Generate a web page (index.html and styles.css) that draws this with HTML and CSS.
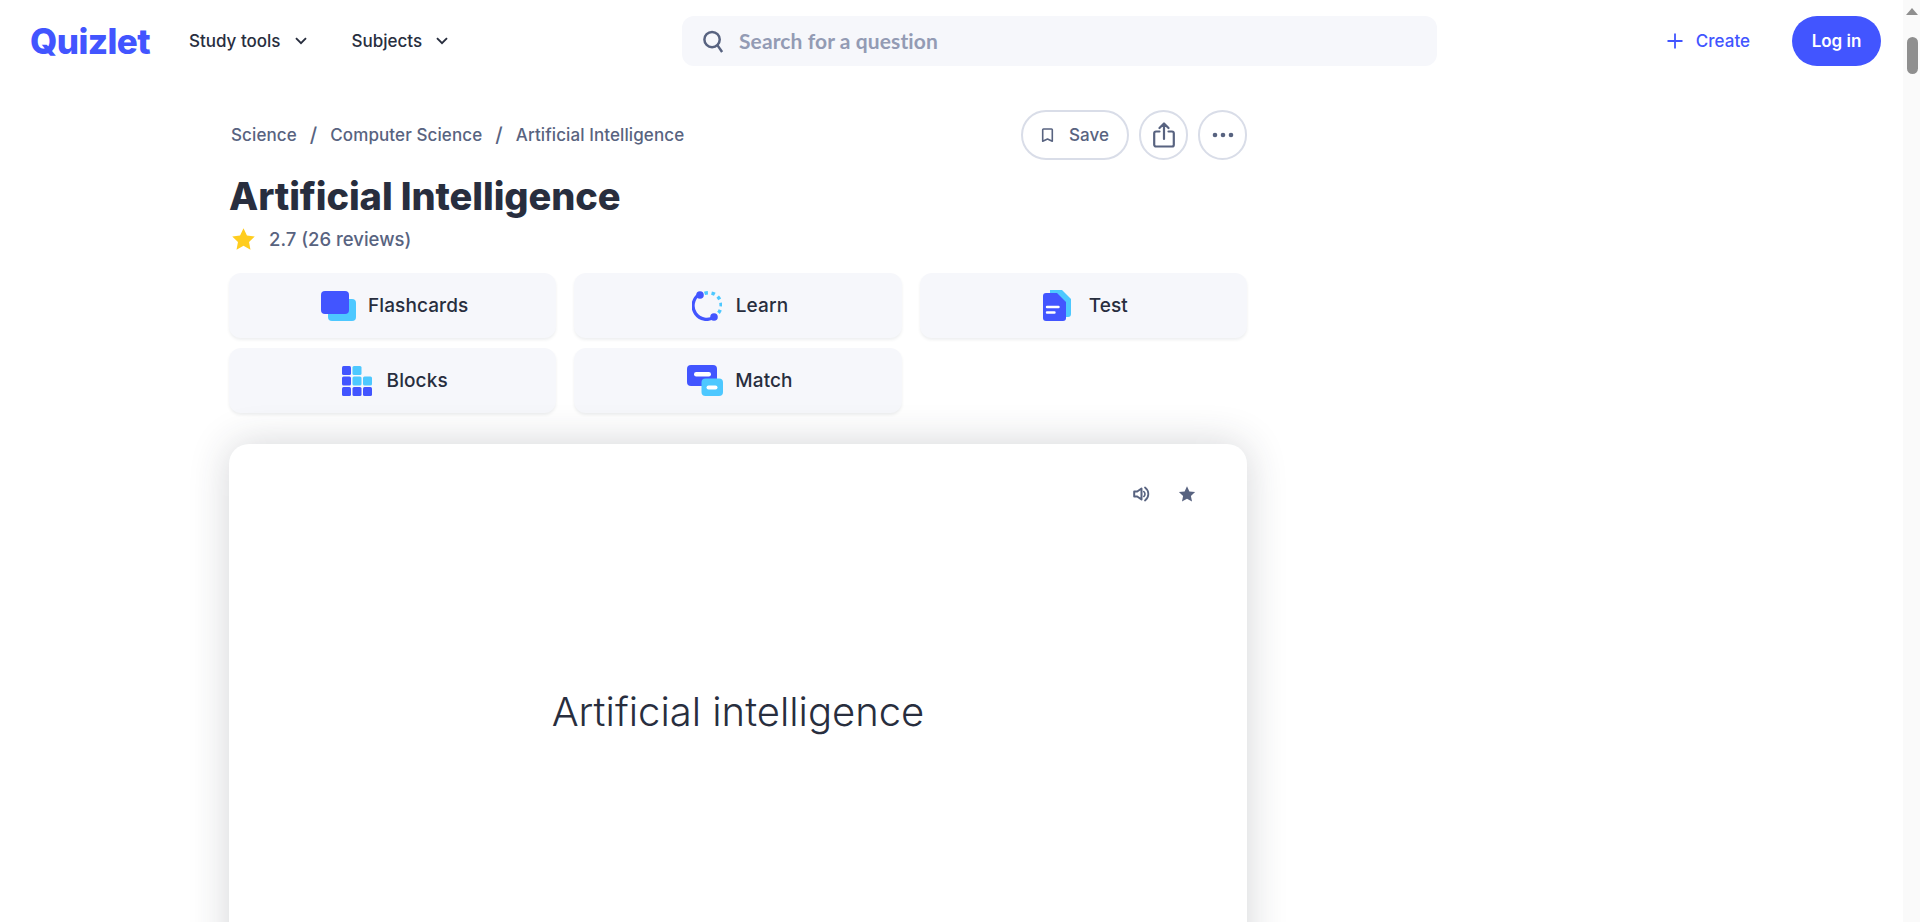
FILE: index.html
```html
<!DOCTYPE html>
<html lang="en">
<head>
<meta charset="utf-8">
<title>Artificial Intelligence | Quizlet</title>
<link rel="stylesheet" href="styles.css">
</head>
<body>
<header class="topbar">
  <div class="nav-left">
    <a class="logo">Quizlet</a>
    <a class="nav-item">Study tools
      <svg class="chev" viewBox="0 0 12 8"><path d="M1 1.2l5 5 5-5"/></svg></a>
    <a class="nav-item">Subjects
      <svg class="chev" viewBox="0 0 12 8"><path d="M1 1.2l5 5 5-5"/></svg></a>
  </div>
  <div class="search">
    <svg class="search-icon" viewBox="0 0 24 24"><circle cx="10.5" cy="10.500" r="8"/><path d="M16.200 16.600L21 23.500"/></svg>
    <span class="search-text">Search for a question</span>
  </div>
  <div class="nav-right">
    <a class="create">
      <svg class="plus" viewBox="0 0 16 16"><path d="M8 .5v15M.5 8h15"/></svg>
      Create</a>
    <a class="login">Log in</a>
  </div>
</header>

<main class="content">
  <div class="crumb-row">
    <nav class="crumbs">
      <a>Science</a><span class="sep">/</span><a>Computer Science</a><span class="sep">/</span><a>Artificial Intelligence</a>
    </nav>
    <div class="actions">
      <button class="pill">
        <svg class="bookmark" viewBox="0 0 12 15"><path d="M1.200 1.800a.8.8 0 0 1 .8-.8h8a.8.8 0 0 1 .8.8v11.400L6 11l-4.800 2.200z"/></svg>
        Save</button>
      <button class="round">
        <svg class="share" viewBox="0 0 22 26"><path d="M6.500 9.500H3a1.800 1.800 0 0 0-1.800 1.800v11.400A1.800 1.800 0 0 0 3 24.500h16a1.800 1.800 0 0 0 1.800-1.800V11.300a1.800 1.800 0 0 0-1.800-1.800h-3.500M11 17V2M6.500 6L11 1.500 15.500 6"/></svg>
      </button>
      <button class="round">
        <svg class="dots" viewBox="0 0 22 6"><circle cx="3" cy="3" r="2.300"/><circle cx="11" cy="3" r="2.300"/><circle cx="19" cy="3" r="2.300"/></svg>
      </button>
    </div>
  </div>

  <h1 class="title">Artificial Intelligence</h1>
  <div class="rating">
    <svg class="rating-star" viewBox="0 0 24 24"><path d="M12 1.200l3.300 6.900 7.500 1-5.500 5.200 1.400 7.500-6.700-3.700-6.700 3.700 1.400-7.500L1.200 9.100l7.500-1z"/></svg>
    <span>2.7 (26 reviews)</span>
  </div>

  <div class="modes">
    <a class="mode">
      <svg class="mi mi-flash" viewBox="0 0 35 30"><rect x="7" y="8" width="28" height="22" rx="4" fill="#4dc8ff"/><rect x="0" y="0" width="28" height="23" rx="4" fill="#4255ff"/></svg>
      Flashcards</a>
    <a class="mode">
      <svg class="mi mi-learn" viewBox="0 0 30 30"><path d="M7 3.500a12 12 0 0 0 15.500 22.500" fill="none" stroke="#4255ff" stroke-width="3.200"/><path d="M12.500 2.400a12.500 12.500 0 0 1 12 21.500" fill="none" stroke="#4dc8ff" stroke-width="3.400" stroke-dasharray="3.500 3.600"/><circle cx="8" cy="4" r="3.800" fill="#4255ff"/><circle cx="22" cy="26" r="3.800" fill="#4255ff"/></svg>
      Learn</a>
    <a class="mode">
      <svg class="mi mi-test" viewBox="0 0 28 31"><path d="M7 0h12l9 9v15a3 3 0 0 1-3 3H7z" fill="#4dc8ff"/><path d="M3 3h11l9 9v16a3 3 0 0 1-3 3H3a3 3 0 0 1-3-3V6a3 3 0 0 1 3-3z" fill="#4255ff"/><path d="M4 17h11.500M4 22.500h7.500" stroke="#fff" stroke-width="2.400" stroke-linecap="round" fill="none"/></svg>
      Test</a>
    <a class="mode">
      <svg class="mi mi-blocks" viewBox="0 0 30 30"><g fill="#4255ff"><rect width="9" height="9" rx="1.500"/><rect y="10.500" width="9" height="9" rx="1.500"/><rect y="21" width="9" height="9" rx="1.500"/><rect x="10.500" y="21" width="9" height="9" rx="1.500"/><rect x="21" y="21" width="9" height="9" rx="1.500"/></g><g fill="#4dc8ff"><rect x="10.500" width="9" height="9" rx="1.500"/><rect x="10.500" y="10.500" width="9" height="9" rx="1.500"/><rect x="21" y="10.500" width="9" height="9" rx="1.500"/></g></svg>
      Blocks</a>
    <a class="mode">
      <svg class="mi mi-match" viewBox="0 0 36 31"><rect width="30" height="21" rx="4" fill="#4255ff"/><rect x="7" y="7" width="17" height="4.500" rx="2.200" fill="#fff"/><rect x="14.500" y="13.500" width="21.500" height="17.500" rx="4" fill="#4dc8ff"/><rect x="19.500" y="20.500" width="11" height="4" rx="2" fill="#fff"/></svg>
      Match</a>
  </div>

  <section class="card">
    <div class="card-tools">
      <svg class="tool-sound" viewBox="0 0 18 16"><path d="M1.200 5.500h3L8.500 2.500v11l-4.300-3h-3z" fill="none" stroke="#586380" stroke-width="2" stroke-linejoin="round"/><path d="M12 1.500a8 8 0 0 1 0 13" fill="none" stroke="#586380" stroke-width="1.800" stroke-linecap="round"/><path d="M10.800 5.500a3.200 3.200 0 0 1 0 5" fill="none" stroke="#586380" stroke-width="1.600" stroke-linecap="round"/></svg>
      <svg class="tool-star" viewBox="0 0 24 24"><path d="M12 1.500l3.200 7 7.600.9-5.600 5.200 1.500 7.500-6.700-3.800-6.700 3.800 1.500-7.500-5.600-5.200 7.600-.9z"/></svg>
    </div>
    <p class="term">Artificial intelligence</p>
  </section>
</main>

<div class="scrollbar" aria-hidden="true">
  <span class="arrow"></span>
  <span class="thumb"></span>
</div>
</body>
</html>
```
FILE: styles.css
```css
* { box-sizing: border-box; }
html, body { margin: 0; height: 922px; overflow: hidden; background: #fff; }
body { font-family: Inter, "Open Sans", sans-serif; color: #282e3e; }
a { color: inherit; text-decoration: none; }

.topbar {
  display: flex;
  align-items: center;
  height: 82px;
  padding: 0 39px 0 30px;
}
.nav-left { display: flex; align-items: center; width: 652px; }
.logo {
  font-weight: 800;
  font-size: 35px;
  letter-spacing: -.6px;
  color: #4255ff;
  width: 159px;
}
.nav-item {
  display: flex;
  align-items: center;
  font-size: 17px;
  font-weight: 500;
  gap: 14px;
  margin-right: 45px;
  white-space: nowrap;
}
.chev { width: 12px; height: 8px; fill: none; stroke: #282e3e; stroke-width: 1.900; }

.search {
  display: flex;
  align-items: center;
  width: 755px;
  height: 50px;
  padding-left: 20px;
  background: #f6f7fb;
  border-radius: 12px;
}
.search-icon { width: 23px; height: 24px; fill: none; stroke: #586380; stroke-width: 2.600; margin-right: 14px; }
.search-text { font-family: Lato, sans-serif; font-size: 21px; font-weight: 700; letter-spacing: .1px; color: #939bb4; margin-bottom: 2px; }

.nav-right { display: flex; align-items: center; margin-left: auto; }
.create {
  display: flex;
  align-items: center;
  gap: 13px;
  font-size: 17px;
  font-weight: 500;
  color: #4255ff;
  margin-right: 42px;
}
.plus { width: 16px; height: 16px; fill: none; stroke: #4255ff; stroke-width: 1.800; }
.login {
  display: flex;
  align-items: center;
  justify-content: center;
  width: 89px;
  height: 50px;
  border-radius: 25px;
  background: #4255ff;
  color: #fff;
  font-size: 17px;
  font-weight: 600;
}

.content { width: 1018px; margin-left: 229px; }
.crumb-row { display: flex; justify-content: space-between; align-items: center; height: 50px; margin-top: 28px; }
.crumbs { display: flex; align-items: center; padding-left: 2px; font-size: 17px; font-weight: 500; letter-spacing: .1px; color: #586380; }
.sep { margin: 0 13px; font-size: 20px; }
.actions { display: flex; gap: 10px; }
.pill, .round {
  display: flex;
  align-items: center;
  justify-content: center;
  height: 50px;
  background: #fff;
  border: 2px solid #d9dde8;
  border-radius: 25px;
  font-family: inherit;
  color: #586380;
  padding: 0;
}
.pill { width: 108px; gap: 15px; font-size: 17px; font-weight: 500; }
.round { width: 49px; }
.bookmark { width: 13px; height: 15px; fill: none; stroke: #586380; stroke-width: 1.600; stroke-linejoin: round; }
.share { width: 22px; height: 26px; fill: none; stroke: #586380; stroke-width: 2.200; stroke-linecap: round; stroke-linejoin: round; }
.dots { width: 22px; height: 6px; fill: #586380; }

.title { margin: 14px 0 0; font-size: 38px; line-height: 44px; font-weight: 800; letter-spacing: -.1px; color: #282e3e; }
.rating { display: flex; align-items: center; height: 28px; margin-top: 7px; padding-left: 2px; font-size: 18.500px; font-weight: 500; color: #586380; gap: 13px; }
.rating-star { width: 25px; height: 25px; fill: #ffcd1f; }

.modes { display: grid; grid-template-columns: repeat(3, 1fr); gap: 10px 18px; margin-top: 20px; }
.mode {
  display: flex;
  align-items: center;
  justify-content: center;
  gap: 14px;
  height: 65px;
  padding-left: 4px;
  background: #f6f7fb;
  border-radius: 12px;
  box-shadow: 0 2px 3px rgba(40, 46, 62, .08);
  font-size: 19px;
  font-weight: 500;
  letter-spacing: .1px;
  color: #282e3e;
}
.mi { flex: none; }
.mi-flash { width: 35px; height: 30px; margin-right: -2px; }
.mi-learn { width: 30px; height: 30px; }
.mi-test { width: 28px; height: 31px; margin-right: 4px; }
.mi-blocks { width: 30px; height: 30px; margin-right: 1px; }
.mi-match { width: 36px; height: 31px; margin-right: -2px; }

.card {
  position: relative;
  height: 534px;
  margin-top: 31px;
  display: flex;
  align-items: center;
  justify-content: center;
  background: #fff;
  border-radius: 20px;
  box-shadow: 0 0 40px rgba(40, 46, 62, .2);
}
.card-tools { position: absolute; top: 41px; right: 51px; display: flex; align-items: center; gap: 27px; }
.tool-sound { width: 18px; height: 16px; }
.tool-star { width: 18px; height: 18px; fill: #586380; }
.term { margin: 0; font-size: 40px; font-weight: 300; color: #282e3e; }

.scrollbar { position: fixed; top: 0; right: 0; width: 17px; height: 922px; background: #fafafa; }
.arrow { position: absolute; top: 8px; left: 3px; width: 0; height: 0; border-left: 6.500px solid transparent; border-right: 6.500px solid transparent; border-bottom: 7px solid #8f8f8f; }
.thumb { position: absolute; top: 37px; left: 4px; width: 11px; height: 37px; border-radius: 6px; background: #8f8f8f; }
```
